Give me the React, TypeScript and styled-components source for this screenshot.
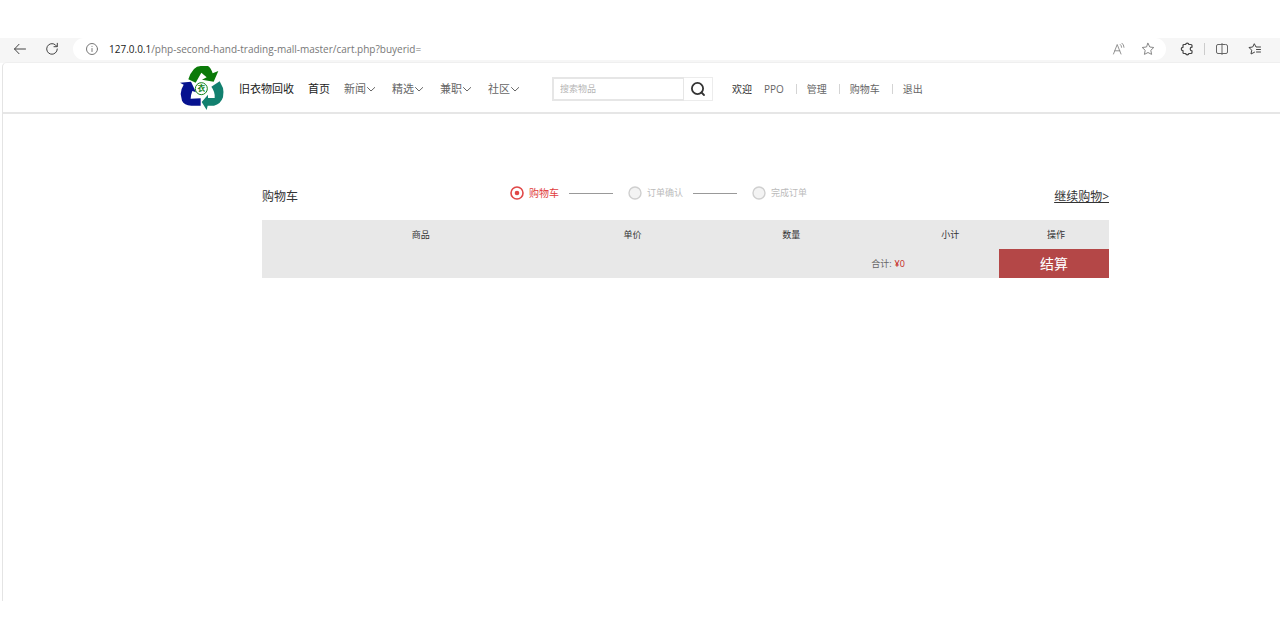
import React from "react";
import styled, { createGlobalStyle } from "styled-components";

const GlobalStyle = createGlobalStyle`
  *, *::before, *::after { box-sizing: border-box; }
  body {
    margin: 0;
    background: #fff;
    color: #333;
    font-family: "Open Sans", "Noto Sans CJK SC", sans-serif;
    font-size: 11px;
    line-height: 16px;
  }
  button, input { font-family: inherit; }
  a { color: inherit; text-decoration: none; }
`;

const Window = styled.div`
  padding-top: 38px;
`;

const Toolbar = styled.div`
  display: flex;
  align-items: center;
  height: 25px;
  padding: 0 18px 3px 13px;
  background: #f6f6f6;
`;

const ToolButton = styled.button<{ $gap?: number }>`
  display: flex;
  align-items: center;
  justify-content: center;
  flex: none;
  width: 14px;
  height: 14px;
  margin-left: ${({ $gap = 0 }) => $gap}px;
  padding: 0;
  border: 0;
  background: none;
  color: #444;
`;

const AddressBar = styled.div`
  display: flex;
  align-items: center;
  flex: 1;
  min-width: 0;
  height: 22px;
  margin-left: 14px;
  padding: 0 11px 0 12px;
  border-radius: 11px;
  background: #fff;
`;

const Address = styled.p`
  flex: 1;
  margin: 0 0 0 10px;
  color: #777;
  font-size: 10px;
  white-space: nowrap;
`;

const Host = styled.span`
  color: #222;
`;

const ToolDivider = styled.span`
  width: 1px;
  height: 12px;
  margin-left: 10px;
  background: #ccc;
`;

const Page = styled.div`
  min-height: calc(100vh - 100px);
  margin-top: -1px;
  margin-left: 2px;
  border-left: 1px solid #e4e4e4;
  border-top: 1px solid #efefef;
  border-top-left-radius: 5px;
  background: #fff;
`;

const Header = styled.header`
  display: flex;
  align-items: center;
  height: 51px;
  padding: 2px 0 0 177px;
  border-bottom: 2px solid #e6e6e6;
  white-space: nowrap;
`;

const Nav = styled.nav`
  display: flex;
  align-items: center;
  gap: 14px;
  margin-left: 15px;
`;

const NavLink = styled.a`
  color: #222;
`;

const NavMenu = styled.button`
  display: flex;
  align-items: center;
  width: 34px;
  padding: 0;
  border: 0;
  background: none;
  color: #666;
  font-size: 11px;
  line-height: 16px;
`;

const Search = styled.form`
  display: flex;
  height: 24px;
  margin-left: 30px;
`;

const SearchInput = styled.input`
  width: 132px;
  padding: 0 6px;
  border: 2px solid #e6e6e6;
  border-right-width: 1px;
  background: #fff;
  color: #333;
  font-size: 9px;
  &::placeholder { color: #b5b5b5; opacity: 1; }
`;

const SearchButton = styled.button`
  display: flex;
  align-items: center;
  justify-content: center;
  width: 29px;
  padding: 0;
  border: 1px solid #ececec;
  border-left: 0;
  background: #fff;
  color: #333;
`;

const Account = styled.div`
  display: flex;
  align-items: center;
  margin-left: 19px;
  color: #666;
  font-size: 10px;
`;

const Greeting = styled.span`
  margin-right: 12px;
  color: #333;
`;

const AccountLink = styled.a`
  & + & {
    display: flex;
    align-items: center;
  }
  & + &::before {
    content: "";
    width: 1px;
    height: 10px;
    margin: 0 10px 0 12px;
    background: #d4d4d4;
  }
`;

const Cart = styled.main`
  margin: 71px 171px 0 259px;
`;

const CartTop = styled.div`
  display: grid;
  grid-template-columns: 248px 1fr auto;
  align-items: start;
  height: 35px;
`;

const Title = styled.h1`
  margin: 4px 0 0;
  font-size: 12px;
  font-weight: 400;
  line-height: 16px;
`;

const Steps = styled.ol`
  display: flex;
  margin: 0;
  padding: 0;
  list-style: none;
`;

const Step = styled.li<{ $active?: boolean }>`
  display: flex;
  align-items: center;
  gap: 5px;
  color: ${({ $active }) => ($active ? "#e03c3c" : "#bbb")};
  font-size: ${({ $active }) => ($active ? 10 : 9)}px;
  &:not(:last-child)::after {
    content: "";
    width: 44px;
    height: 1px;
    margin: 0 15px 0 5px;
    background: #999;
  }
`;

const ContinueLink = styled.a`
  margin-top: 4px;
  font-size: 12px;
  text-decoration: underline;
`;

const Table = styled.table`
  width: 100%;
  border-collapse: collapse;
  table-layout: fixed;
  background: #e8e8e8;
`;

const HeadCell = styled.th<{ $share: number }>`
  width: ${({ $share }) => $share}%;
  height: 29px;
  padding: 0;
  font-size: 9px;
  font-weight: 400;
  text-align: center;
`;

const Summary = styled.div`
  display: flex;
  align-items: center;
  justify-content: flex-end;
  height: 29px;
  background: #e8e8e8;
`;

const Total = styled.p`
  margin: 0 94px 0 0;
  color: #666;
  font-size: 9px;
`;

const Amount = styled.strong`
  margin-left: 3px;
  color: #c5281c;
  font-weight: 400;
`;

const Checkout = styled.button`
  width: 13%;
  height: 29px;
  padding: 0;
  border: 0;
  background: #b44747;
  color: #fff;
  font-size: 14px;
  line-height: 16px;
`;

const line = { fill: "none", stroke: "currentColor", strokeLinecap: "round", strokeLinejoin: "round" } as const;
const star = "M7 1.3 8.8 5l4 .5-3 2.8.8 4.1L7 10.5l-3.6 1.9.8-4.1-3-2.8 4-.5z";

const Chevron = () => (
  <svg width="10" height="8" viewBox="0 0 10 8" {...line}><path d="M1.5 2.5 5 6l3.700-3.500" /></svg>
);

const Logo = () => (
  <svg width="44" height="46" viewBox="0 0 132 138" role="img" aria-label="旧衣物回收">
    <path fill="#0b7a09" d="M25 40 Q30 22 42 9 50 0 62 0H84Q92 4 98 22L115 15 101 47 66 41 80 34 64 20 47 50Z" />
    <path fill="#06128f" d="M0 50 33 47 48 79 37 75 Q32 88 32 98L62 97V119H34Q12 117 6 104 L2 84Q2 70 11 56Z" />
    <path fill="#12806f" d="M94 62 119 46 129 66Q132 78 129 94 122 115 102 119L83 119 80 132 65 108 84 86V96H104Q106 78 94 62Z" />
    <circle cx="64" cy="68" r="18" fill="#fff" stroke="#16841c" strokeWidth="3" />
    <text x="64" y="76" textAnchor="middle" fontSize="23" fontWeight="700" fill="#16841c">衣</text>
  </svg>
);

const StepDot = ({ active }: { active?: boolean }) => (
  <svg width="14" height="14" viewBox="0 0 14 14">
    <circle cx="7" cy="7" r="6" fill={active ? "#fff" : "#f3f3f3"} stroke={active ? "#e04848" : "#cfcfcf"} strokeWidth={active ? 1.6 : 1.4} />
    {active && <circle cx="7" cy="7" r="2.300" fill="#e04848" />}
  </svg>
);

const menus = ["新闻", "精选", "兼职", "社区"];
const steps = ["购物车", "订单确认", "完成订单"];
const columns: [string, number][] = [["商品", 37.5], ["单价", 12.5], ["数量", 25], ["小计", 12.5], ["操作", 12.5]];

export default function App() {
  return (
    <Window>
      <GlobalStyle />
      <Toolbar>
        <ToolButton aria-label="后退">
          <svg width="14" height="14" viewBox="0 0 14 14" {...line}><path d="M12.500 7H1.500M6 2.300 1.500 7 6 11.700" /></svg>
        </ToolButton>
        <ToolButton aria-label="刷新" $gap={18}>
          <svg width="14" height="14" viewBox="0 0 14 14" {...line}><path d="M12.300 7a5.300 5.300 0 1 1-2-4.200L12 4.500M12.300 1.300v3.400H9" /></svg>
        </ToolButton>
        <AddressBar>
          <ToolButton aria-label="网站信息">
            <svg width="14" height="14" viewBox="0 0 14 14" {...line} stroke="#777"><circle cx="7" cy="7" r="5.500" /><path d="M7 6.500v3M7 4.300v.1" /></svg>
          </ToolButton>
          <Address><Host>127.0.0.1</Host>/php-second-hand-trading-mall-master/cart.php?buyerid=</Address>
          <ToolButton aria-label="朗读">
            <svg width="14" height="14" viewBox="0 0 14 14" {...line} stroke="#888" strokeWidth=".9"><path d="m1.500 12 3.700-9.500L9 12M2.800 8.800h5M8.300 2.500q1.300 1 1.300 2.800M10 1.200q2 1.500 2 4.100" /></svg>
          </ToolButton>
          <ToolButton aria-label="收藏" $gap={15}>
            <svg width="14" height="14" viewBox="0 0 14 14" {...line} stroke="#888"><path d={star} /></svg>
          </ToolButton>
        </AddressBar>
        <ToolButton aria-label="扩展" $gap={14}>
          <svg width="14" height="14" viewBox="0 0 14 14" {...line} strokeWidth="1.2"><path d="M4 2.500h1.600a1.700 1.700 0 0 1 3.300 0H11a1 1 0 0 1 1 1v1.700a1.800 1.800 0 0 0 0 3.600v1.700a1 1 0 0 1-1 1H8.900a1.700 1.700 0 0 1-3.300 0H4a1 1 0 0 1-1-1V8.700a1.700 1.700 0 0 1 0-3.400V3.500a1 1 0 0 1 1-1z" /></svg>
        </ToolButton>
        <ToolDivider />
        <ToolButton aria-label="分屏" $gap={10}>
          <svg width="14" height="14" viewBox="0 0 14 14" {...line} stroke="#666"><path d="M5.500 2.500H3A1.500 1.500 0 0 0 1.500 4v6A1.500 1.500 0 0 0 3 11.500h8a1.500 1.500 0 0 0 1.500-1.500V4A1.500 1.500 0 0 0 11 2.500zM7 1.500v11" /></svg>
        </ToolButton>
        <ToolButton aria-label="收藏夹" $gap={19}>
          <svg width="14" height="14" viewBox="0 0 14 14" {...line}><path d="M6.500 10.200 3 12l.7-3.800L1 5.500l3.700-.5L6.300 1.700 8 5h4.500M8.500 7.500h4M8.500 10h4" /></svg>
        </ToolButton>
      </Toolbar>

      <Page>
        <Header>
          <Logo />
          <Nav>
            <NavLink href="#">旧衣物回收</NavLink>
            <NavLink href="#">首页</NavLink>
            {menus.map((name) => (
              <NavMenu key={name} type="button">{name}<Chevron /></NavMenu>
            ))}
          </Nav>
          <Search>
            <SearchInput type="search" aria-label="搜索物品" placeholder="搜索物品" />
            <SearchButton type="button" aria-label="搜索">
              <svg width="16" height="16" viewBox="0 0 16 16" {...line} strokeWidth="1.8"><circle cx="7.500" cy="7.500" r="5.600" /><path d="m11.500 11.500 2.500 2.500" /></svg>
            </SearchButton>
          </Search>
          <Account>
            <Greeting>欢迎</Greeting>
            <AccountLink href="#">PPO</AccountLink>
            <AccountLink href="#">管理</AccountLink>
            <AccountLink href="#">购物车</AccountLink>
            <AccountLink href="#">退出</AccountLink>
          </Account>
        </Header>

        <Cart>
          <CartTop>
            <Title>购物车</Title>
            <Steps>
              {steps.map((name, i) => (
                <Step key={name} $active={i === 0}><StepDot active={i === 0} />{name}</Step>
              ))}
            </Steps>
            <ContinueLink href="#">继续购物&gt;</ContinueLink>
          </CartTop>
          <Table>
            <thead>
              <tr>
                {columns.map(([name, share]) => (
                  <HeadCell key={name} scope="col" $share={share}>{name}</HeadCell>
                ))}
              </tr>
            </thead>
          </Table>
          <Summary>
            <Total>合计:<Amount>¥0</Amount></Total>
            <Checkout type="button">结算</Checkout>
          </Summary>
        </Cart>
      </Page>
    </Window>
  );
}
